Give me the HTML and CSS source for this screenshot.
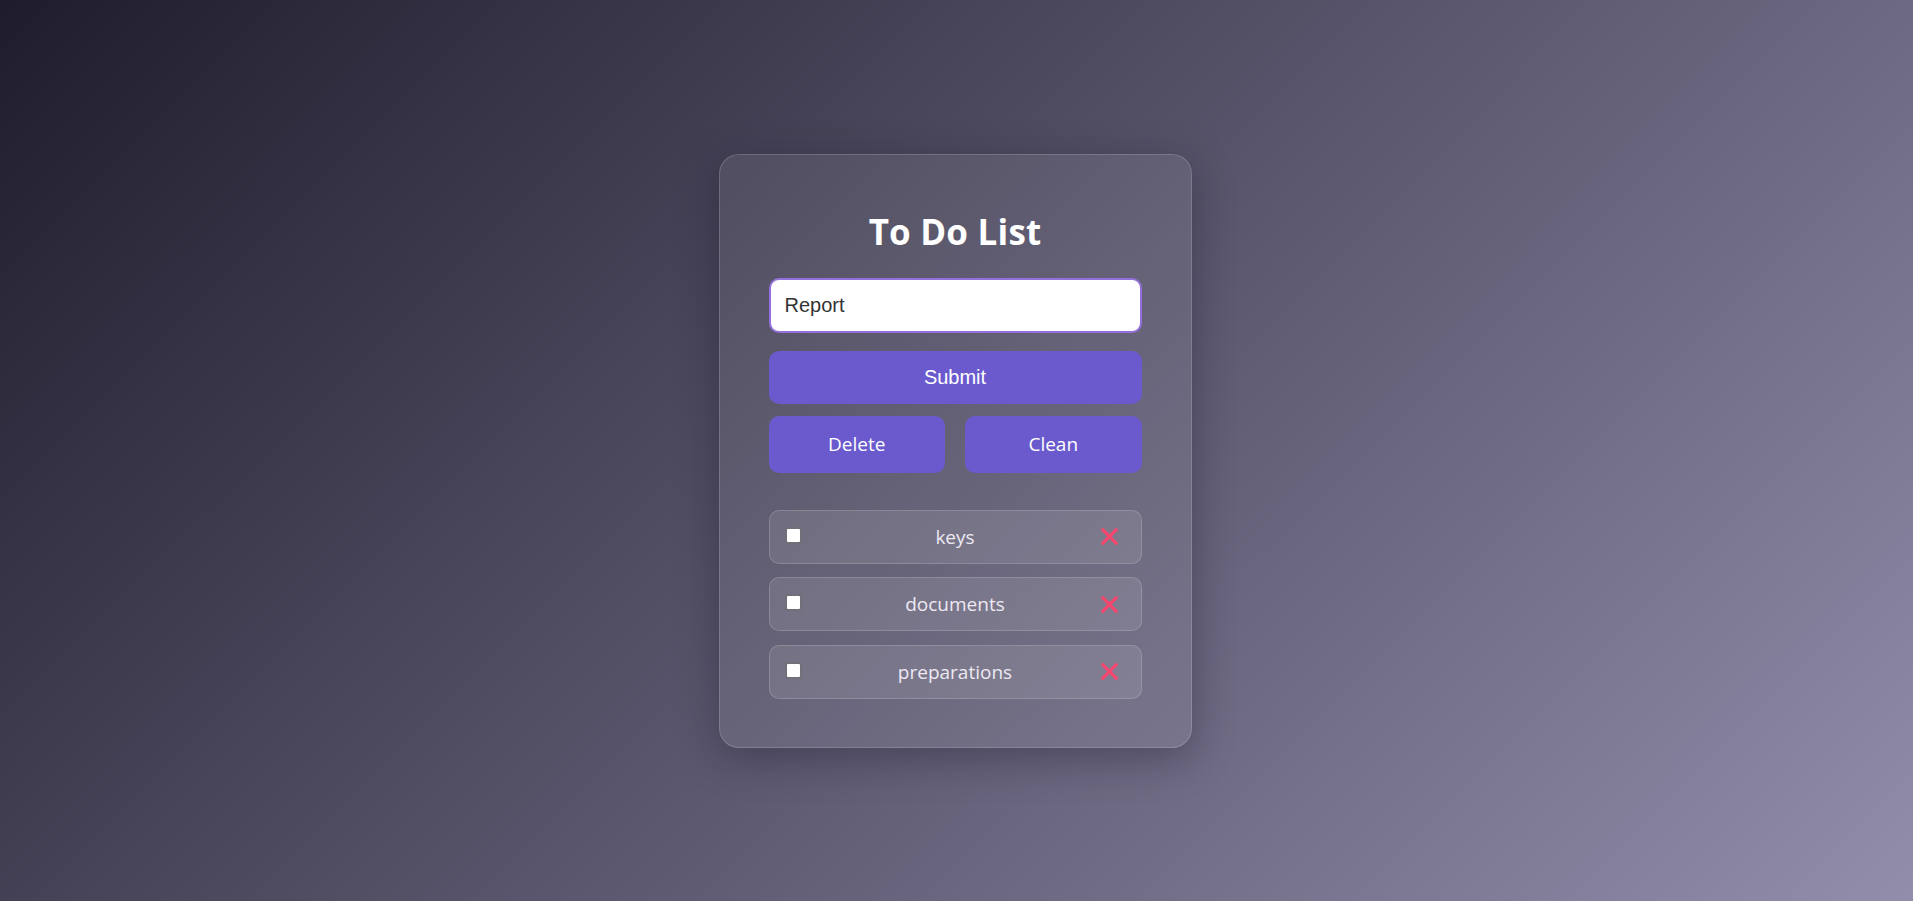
FILE: index.html
```html
<!DOCTYPE html>
<html lang="en">
<head>
<meta charset="utf-8">
<title>To Do List</title>
<link rel="stylesheet" href="styles.css">
</head>
<body>
<main class="card">
  <h1 class="title">To Do List</h1>
  <input class="task-input" type="text" value="Report">
  <button class="btn btn-submit">Submit</button>
  <div class="btn-row">
    <button class="btn btn-action">Delete</button>
    <button class="btn btn-action">Clean</button>
  </div>
  <ul class="list">
    <li class="item">
      <input type="checkbox" class="check">
      <span class="item-text">keys</span>
      <svg class="remove" viewBox="0 0 20 20" width="21" height="21"><path d="M3.5 3.5 L16.5 16.5 M16.5 3.5 L3.5 16.5" /></svg>
    </li>
    <li class="item">
      <input type="checkbox" class="check">
      <span class="item-text">documents</span>
      <svg class="remove" viewBox="0 0 20 20" width="21" height="21"><path d="M3.5 3.5 L16.5 16.5 M16.5 3.5 L3.5 16.5" /></svg>
    </li>
    <li class="item">
      <input type="checkbox" class="check">
      <span class="item-text">preparations</span>
      <svg class="remove" viewBox="0 0 20 20" width="21" height="21"><path d="M3.5 3.5 L16.5 16.5 M16.5 3.5 L3.5 16.5" /></svg>
    </li>
  </ul>
</main>
</body>
</html>
```

FILE: styles.css
```css
* { box-sizing: border-box; }

html, body { height: 100%; }

body {
  margin: 0;
  min-height: 100vh;
  display: flex;
  align-items: center;
  justify-content: center;
  background: linear-gradient(135deg, #1f1c2c 0%, #928dab 100%);
  font-family: "Open Sans", "Noto Sans", sans-serif;
}

.card {
  width: 473px;
  padding: 51px 49px 48px;
  margin-right: 3px;
  border-radius: 20px;
  background: rgba(255, 255, 255, 0.08);
  border: 1px solid rgba(255, 255, 255, 0.16);
  box-shadow: 0 10px 40px rgba(20, 16, 36, 0.35);
  display: flex;
  flex-direction: column;
}

.title {
  margin: 0 0 20px;
  height: 52px;
  line-height: 52px;
  font-size: 35px;
  font-weight: 700;
  color: #ffffff;
  text-align: center;
  letter-spacing: 0.2px;
}

.task-input {
  height: 55px;
  width: 100%;
  border: 2px solid #9370db;
  border-radius: 10px;
  background: #ffffff;
  padding: 0 14px;
  font-family: "Liberation Sans", Arial, sans-serif;
  font-size: 20px;
  color: #333333;
  outline: none;
  margin: 0 0 18px;
}

.btn {
  border: none;
  border-radius: 10px;
  background: #6a5acd;
  color: #ffffff;
  cursor: pointer;
  padding: 0;
}

.btn-submit {
  height: 53px;
  width: 100%;
  font-family: "Liberation Sans", Arial, sans-serif;
  font-size: 20px;
  margin-bottom: 12px;
}

.btn-row {
  display: flex;
  gap: 20px;
}

.btn-action {
  flex: 1;
  height: 57px;
  font-family: "Open Sans", "Noto Sans", sans-serif;
  font-size: 19px;
}

.list {
  list-style: none;
  margin: 37px 0 0;
  padding: 0;
  display: flex;
  flex-direction: column;
  gap: 13.5px;
}

.item {
  height: 54px;
  display: grid;
  grid-template-columns: 1fr auto 1fr;
  align-items: center;
  padding: 0 15px;
  border-radius: 10px;
  background: rgba(255, 255, 255, 0.1);
  border: 1px solid rgba(255, 255, 255, 0.16);
}

.check {
  appearance: none;
  -webkit-appearance: none;
  justify-self: start;
  width: 17px;
  height: 17px;
  margin: 0 0 3px;
  background: #ffffff;
  border: 2px solid #707078;
  border-radius: 3px;
}

.item-text {
  text-align: center;
  font-size: 19px;
  color: #ece9f2;
}

.remove {
  justify-self: end;
  width: 21px;
  height: 21px;
  margin-right: 6px;
  fill: none;
  stroke: #f7476f;
  stroke-width: 3;
  stroke-linecap: round;
}
```
